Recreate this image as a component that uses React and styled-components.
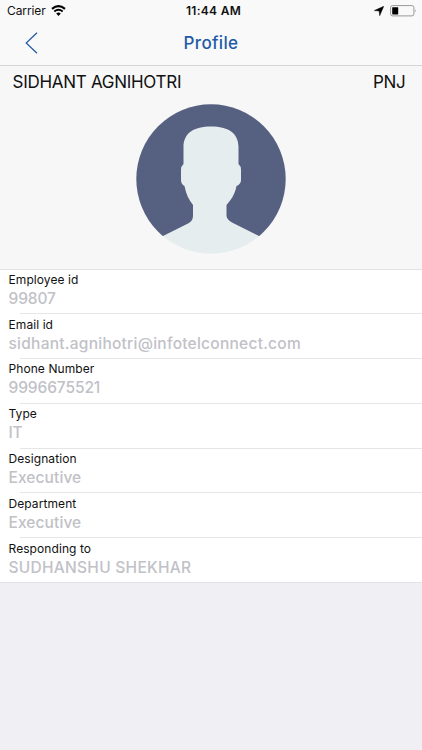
import React from 'react';
import styled, { createGlobalStyle } from 'styled-components';

const GlobalStyle = createGlobalStyle`
  * {
    box-sizing: border-box;
  }
  body {
    margin: 0;
    background-color: #efeff4;
    font-family: Inter, 'Liberation Sans', sans-serif;
    color: #111;
  }
`;

const Screen = styled.div`
  width: 100%;
  height: 750px;
  background-color: #efeff4;
  overflow: hidden;
`;

const StatusBar = styled.div`
  height: 22px;
  padding: 0 5px 0 7px;
  display: grid;
  grid-template-columns: 1fr auto 1fr;
  align-items: center;
  background-color: #f9f9f9;
  font-size: 12px;
  line-height: 14px;
`;

const Carrier = styled.div`
  display: flex;
  align-items: center;
  gap: 5px;
  letter-spacing: -0.1px;
`;

const Clock = styled.div`
  font-weight: 600;
  letter-spacing: 0.3px;
  padding-left: 3px;
`;

const Indicators = styled.div`
  display: flex;
  align-items: center;
  justify-content: flex-end;
  gap: 6px;
`;

const NavBar = styled.div`
  height: 44px;
  padding: 0 25px 2px;
  display: grid;
  grid-template-columns: 1fr auto 1fr;
  align-items: center;
  background-color: #f9f9f9;
  border-bottom: 1px solid #d5d5d7;
`;

const BackButton = styled.button`
  width: 14px;
  height: 22px;
  padding: 0;
  border: none;
  background: none;
  display: flex;
`;

const Title = styled.div`
  font-size: 17px;
  font-weight: 500;
  line-height: 22px;
  color: #1f5ba6;
  letter-spacing: 0.35px;
`;

const Header = styled.div`
  height: 204px;
  background-color: #f7f7f7;
  border-bottom: 1px solid #e2e2e4;
`;

const NameRow = styled.div`
  height: 38px;
  padding: 5px 16.5px 0 12.5px;
  display: flex;
  justify-content: space-between;
  font-size: 17px;
  line-height: 22px;
  letter-spacing: -0.28px;
`;

const Avatar = styled.svg`
  display: block;
  width: 150px;
  height: 150px;
  margin: 0 auto;
`;

const Rows = styled.div`
  background-color: #fff;
  border-bottom: 1px solid #e2e2e4;
`;

const Row = styled.div`
  height: 44.8px;
  padding: 1.4px 0 0 8.5px;
  background: linear-gradient(#e6e6e8, #e6e6e8) 20px 100% / 100% 1px no-repeat;

  &:first-child {
    height: 44.2px;
  }
  &:last-child {
    height: 44px;
    background: none;
  }
`;

const Label = styled.div`
  font-size: 12px;
  line-height: 17px;
  letter-spacing: 0.08px;
`;

const Value = styled.div`
  font-size: 15.5px;
  font-weight: 500;
  line-height: 21px;
  color: #c1c1c7;
  letter-spacing: ${({ $tracking }) => $tracking}px;
`;

const fields = [
  { label: 'Employee id', value: '99807', tracking: -0.1 },
  { label: 'Email id', value: 'sidhant.agnihotri@infotelconnect.com', tracking: 0.25 },
  { label: 'Phone Number', value: '9996675521', tracking: -0.1 },
  { label: 'Type', value: 'IT', tracking: -0.2 },
  { label: 'Designation', value: 'Executive', tracking: 0.1 },
  { label: 'Department', value: 'Executive', tracking: 0.1 },
  { label: 'Responding to', value: 'SUDHANSHU SHEKHAR', tracking: 0.27 },
];

const WifiIcon = () => (
  <svg width='15' height='11.5' viewBox='0 0 14 11'>
    <path d='M0.8 3.7 Q7 -1.5 13.2 3.7' fill='none' stroke='#000' strokeWidth='2' />
    <path d='M3 6.2 Q7 3 11 6.2' fill='none' stroke='#000' strokeWidth='1.8' />
    <path d='M7 10.5 L4.8 8.1 Q7 6.4 9.2 8.1 Z' />
  </svg>
);

const LocationIcon = () => (
  <svg width='10' height='10' viewBox='0 0 10 10'>
    <path d='M9.8 0.2 L5.7 9.8 L5.1 5 L0.2 4.6 Z' stroke='#000' strokeWidth='0.4' />
  </svg>
);

const BatteryIcon = () => (
  <svg width='27' height='12' viewBox='0 0 27 12'>
    <rect x='0.6' y='0.6' width='23.3' height='10.3' rx='2' fill='none' stroke='#999' />
    <rect x='2.2' y='2.2' width='6' height='7.2' rx='0.4' />
    <path d='M25.1 4 Q26.6 5.8 25.1 7.6 Z' fill='#999' />
  </svg>
);

const Profile = () => {
  return (
    <>
      <StatusBar>
        <Carrier>
          <span>Carrier</span>
          <WifiIcon />
        </Carrier>
        <Clock>11:44 AM</Clock>
        <Indicators>
          <LocationIcon />
          <BatteryIcon />
        </Indicators>
      </StatusBar>
      <NavBar>
        <BackButton aria-label='Back'>
          <svg width='14' height='22' viewBox='0 0 14 22'>
            <path d='M12 0.7 L1.2 11 L12 21.3' fill='none' stroke='#2059a0' strokeWidth='1.2' />
          </svg>
        </BackButton>
        <Title>Profile</Title>
      </NavBar>
      <Header>
        <NameRow>
          <div>SIDHANT AGNIHOTRI</div>
          <div>PNJ</div>
        </NameRow>
        <Avatar viewBox='0 0 150 150'>
          <defs>
            <clipPath id='backdrop'>
              <rect width='150' height='132' />
            </clipPath>
            <clipPath id='face'>
              <circle cx='75' cy='75' r='74.7' />
            </clipPath>
          </defs>
          <circle cx='75' cy='75' r='74.7' fill='#566080' clipPath='url(#backdrop)' />
          <path
            clipPath='url(#face)'
            fill='#e6edee'
            d='M75 22.5 C58 22.5 47.5 29 47.5 43 V60 Q45 62 45 66 V76 Q45 80 48.5 82 C50 90 53 96 57 101 V111 C57 115 56 117 53 119 L27 132 L0 150 H150 L123 132 L97 119 C93.500 117 90.500 115 90.500 111 V101 C95 96 99 90 100.500 82 Q105 80 105 76 V66 Q105 62 102.500 60 V43 C102.500 29 92 22.500 75 22.500 Z'
          />
        </Avatar>
      </Header>
      <Rows>
        {fields.map((field) => (
          <Row key={field.label}>
            <Label>{field.label}</Label>
            <Value $tracking={field.tracking}>{field.value}</Value>
          </Row>
        ))}
      </Rows>
    </>
  );
};

const App = () => (
  <Screen>
    <GlobalStyle />
    <Profile />
  </Screen>
);

export default App;
